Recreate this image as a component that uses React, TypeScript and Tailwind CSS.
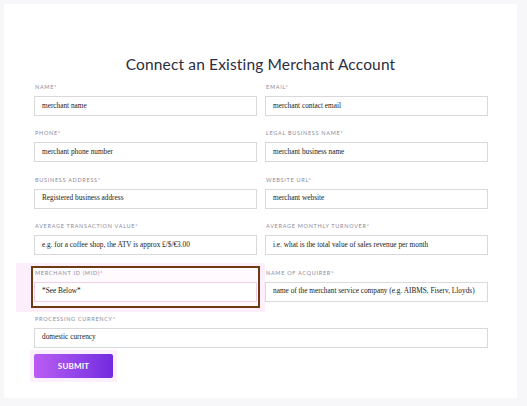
import React from "react";

type Field = {
  label: string;
  value: string;
  full?: boolean;
  highlight?: boolean;
};

const fields: Field[] = [
  { label: "Name", value: "merchant name" },
  { label: "Email", value: "merchant contact email" },
  { label: "Phone", value: "merchant phone number" },
  { label: "Legal Business Name", value: "merchant business name" },
  { label: "Business Address", value: "Registered business address" },
  { label: "Website URL", value: "merchant website" },
  { label: "Average Transaction Value", value: "e.g. for a coffee shop, the ATV is approx £/$/€3.00" },
  { label: "Average Monthly Turnover", value: "i.e. what is the total value of sales revenue per month" },
  { label: "Merchant ID (MID)", value: "*See Below*", highlight: true },
  { label: "Name of Acquirer", value: "name of the merchant service company (e.g. AIBMS, Fiserv, Lloyds)" },
  { label: "Processing Currency", value: "domestic currency", full: true },
];

const FormField = ({ field }: { field: Field }) => {
  return (
    <div className={`relative ${field.full ? "col-span-2" : ""}`}>
      {field.highlight && (
        <>
          {/* pink glow behind the highlighted field */}
          <div className="absolute -left-[18px] -top-[5px] -right-[8px] -bottom-[10px] bg-[#fdeefc]"></div>
          <div className="absolute -left-[3px] -top-[2px] -right-[3px] -bottom-[6px] border-2 border-[#6e3a12] bg-[#fffafe]"></div>
        </>
      )}
      <div className="relative">
        <label className="block h-[10px] leading-[10px] text-[5.5px] uppercase tracking-[0.13em] text-[#8b8a9c] font-['Lato',sans-serif] pl-px">
          {field.label}*
        </label>
        <div
          className={`mt-[4px] h-[20px] flex items-center px-[7px] border bg-white text-[7.3px] text-[#222] font-['Liberation_Serif',serif] whitespace-nowrap overflow-hidden ${
            field.highlight ? "border-[#f3cfe9]" : "border-[#d9d9dc]"
          }`}
        >
          {field.value}
        </div>
      </div>
    </div>
  );
};

export default function App() {
  return (
    <div className="w-[527px] h-[406px] bg-[#f7f7f9] overflow-hidden">
      <div className="ml-[4px] mt-[4px] w-[513px] h-[394px] bg-white px-[30px]">
        <h1 className="pt-[49px] h-[72px] text-center text-[15.5px] leading-[22px] text-[#2b2d42] font-['Lato',sans-serif] tracking-[0.01em]">
          Connect an Existing Merchant Account
        </h1>

        <div className="mt-[6px] grid grid-cols-2 gap-x-[8px] gap-y-[12.4px] w-[454px]">
          {fields.map((f) => (
            <FormField key={f.label} field={f} />
          ))}
        </div>

        <div className="mt-[6px] inline-block shadow-[0_0_0_4px_#fdf0fd]">
          <button className="w-[79px] h-[24px] rounded-[2px] bg-gradient-to-r from-[#bb5cf3] to-[#7329e0] text-white text-[8px] font-bold tracking-[0.02em] font-['Lato',sans-serif] flex items-center justify-center">
            SUBMIT
          </button>
        </div>
      </div>
    </div>
  );
}
